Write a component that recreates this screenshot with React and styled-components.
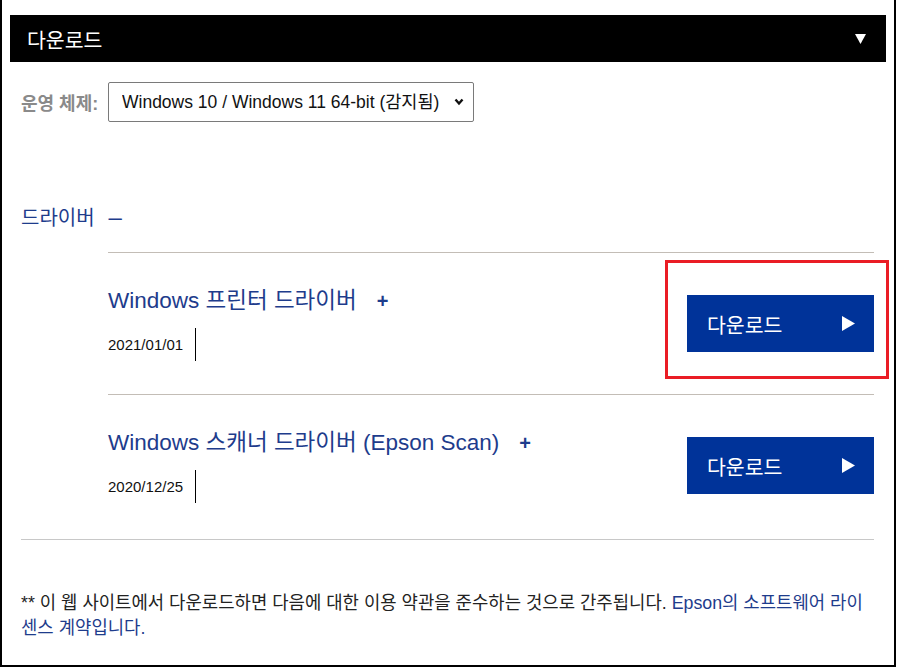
import React from "react";
import styled, { createGlobalStyle } from "styled-components";

const GlobalStyle = createGlobalStyle`
  html, body {
    margin: 0;
    padding: 0;
    background: #ffffff;
  }
  body {
    font-family: "Liberation Sans", "Noto Sans CJK KR", Arial, sans-serif;
    color: #222222;
  }
`;

const Frame = styled.div`
  width: 896px;
  height: 667px;
  box-sizing: border-box;
  padding: 15px 8px 0;
  border: 2px solid #000000;
  border-top: none;
  overflow: hidden;
`;

const Header = styled.div`
  height: 47px;
  display: flex;
  align-items: center;
  justify-content: space-between;
  padding: 0 20px 0 17px;
  background: #000000;
  color: #ffffff;
  font-size: 20.5px;
`;

const Content = styled.div`
  padding: 0 12px 0 11px;
`;

const OsRow = styled.div`
  margin-top: 20px;
  display: flex;
  align-items: center;
`;

const OsLabel = styled.label`
  width: 87px;
  font-size: 18px;
  font-weight: bold;
  color: #8a8a8a;
`;

const SelectWrap = styled.div`
  position: relative;
  width: 366px;
  height: 40px;
`;

const Select = styled.select`
  appearance: none;
  width: 100%;
  height: 100%;
  box-sizing: border-box;
  padding: 0 30px 0 13px;
  border: 1px solid #7a7a7a;
  border-radius: 2px;
  background: #ffffff;
  font-family: "Liberation Sans", "Noto Sans CJK KR", Arial, sans-serif;
  font-size: 17.5px;
  color: #111111;
`;

const Chevron = styled.svg`
  position: absolute;
  right: 10px;
  top: 16px;
  pointer-events: none;
`;

const SectionHeading = styled.div`
  height: 26px;
  margin-top: 83px;
  margin-bottom: 21px;
  line-height: 26px;
  font-size: 20px;
  color: #1e3c8c;
`;

const Dash = styled.span`
  margin-left: 14px;
  font-size: 24px;
  line-height: 0;
`;

const List = styled.div`
  margin-left: 87px;
`;

const Item = styled.div`
  display: flex;
  justify-content: space-between;
  align-items: flex-start;
  padding: 33px 0;
  border-top: 1px solid #c3bdb6;
`;

const ItemInfo = styled.div`
  display: flex;
  flex-direction: column;
  align-items: flex-start;
`;

const ItemTitle = styled.div`
  line-height: 30px;
  font-size: 22.5px;
  color: #1e3c8c;
`;

const Plus = styled.span`
  margin-left: 20px;
  font-size: 20px;
  font-weight: bold;
`;

const DateCell = styled.div`
  margin-top: 12px;
  height: 33px;
  line-height: 33px;
  padding-right: 12px;
  border-right: 1px solid #000000;
  font-size: 15px;
  color: #111111;
`;

const ButtonWrap = styled.div`
  position: relative;
  margin-top: 9px;
`;

const Highlight = styled.div`
  position: absolute;
  top: -35px;
  left: -22px;
  right: -15px;
  bottom: -27px;
  border: 3px solid #ea1d25;
  pointer-events: none;
`;

const DownloadButton = styled.button`
  width: 187px;
  height: 57px;
  display: flex;
  align-items: center;
  justify-content: space-between;
  padding: 0 19px 0 20px;
  box-sizing: border-box;
  border: none;
  background: #003399;
  color: #ffffff;
  font-family: "Liberation Sans", "Noto Sans CJK KR", Arial, sans-serif;
  font-size: 20.5px;
  cursor: pointer;
`;

const Separator = styled.div`
  margin-top: 3px;
  border-top: 1px solid #c8c8c8;
`;

const Footer = styled.p`
  margin: 51px 0 0;
  font-size: 17.8px;
  line-height: 25px;
  color: #222222;
  white-space: nowrap;
`;

const FooterLink = styled.a`
  color: #1e3c8c;
  text-decoration: none;
`;

const drivers = [
  { title: "Windows 프린터 드라이버", date: "2021/01/01", highlighted: true },
  { title: "Windows 스캐너 드라이버 (Epson Scan)", date: "2020/12/25" },
];

function PlayIcon() {
  return (
    <svg width="13" height="15" viewBox="0 0 13 15">
      <polygon points="0,0 13,7.5 0,15" fill="#ffffff" />
    </svg>
  );
}

function DriverItem({ title, date, highlighted }) {
  return (
    <Item>
      <ItemInfo>
        <ItemTitle>
          {title}
          <Plus>+</Plus>
        </ItemTitle>
        <DateCell>{date}</DateCell>
      </ItemInfo>
      <ButtonWrap>
        {highlighted && <Highlight />}
        <DownloadButton>
          <span>다운로드</span>
          <PlayIcon />
        </DownloadButton>
      </ButtonWrap>
    </Item>
  );
}

export default function App() {
  return (
    <>
      <GlobalStyle />
      <Frame>
        <Header>
          <span>다운로드</span>
          <svg width="11" height="10" viewBox="0 0 11 10">
            <polygon points="0,0 11,0 5.5,10" fill="#ffffff" />
          </svg>
        </Header>
        <Content>
          <OsRow>
            <OsLabel>운영 체제:</OsLabel>
            <SelectWrap>
              <Select defaultValue="win">
                <option value="win">Windows 10 / Windows 11 64-bit (감지됨)</option>
              </Select>
              <Chevron width="10" height="8" viewBox="0 0 10 8">
                <polyline
                  points="1.5,1.5 5,5.5 8.5,1.5"
                  fill="none"
                  stroke="#111111"
                  strokeWidth="2.4"
                />
              </Chevron>
            </SelectWrap>
          </OsRow>

          <SectionHeading>
            드라이버<Dash>–</Dash>
          </SectionHeading>

          <List>
            {drivers.map((d) => (
              <DriverItem key={d.title} {...d} />
            ))}
          </List>
          <Separator />

          <Footer>
            ** 이 웹 사이트에서 다운로드하면 다음에 대한 이용 약관을 준수하는 것으로 간주됩니다.{" "}
            <FooterLink href="#">
              Epson의 소프트웨어 라이
              <br />
              센스 계약입니다.
            </FooterLink>
          </Footer>
        </Content>
      </Frame>
    </>
  );
}
